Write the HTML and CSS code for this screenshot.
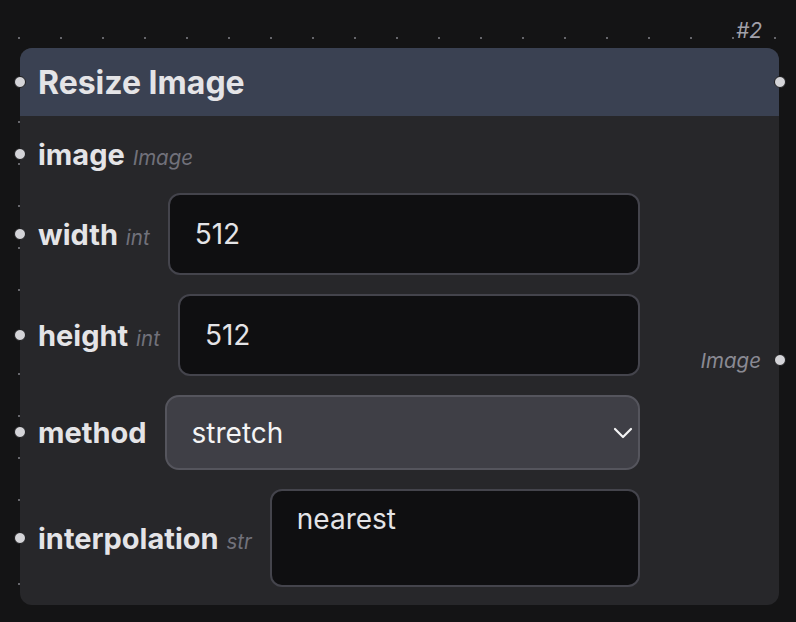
FILE: index.html
```html
<!doctype html>
<html>

<head>
    <title>Resize Image</title>
    <link rel="stylesheet" href="styles.css">
</head>

<body>
    <div class="canvas">
        <div class="node">
            <span class="node-id">#2</span>
            <div class="node-header">
                <span class="port port-left"></span>
                <h1>Resize Image</h1>
                <span class="port port-right"></span>
            </div>
            <div class="node-body">
                <div class="inputs">
                    <div class="field field-image">
                        <span class="port port-left"></span>
                        <label>image <i>Image</i></label>
                    </div>
                    <div class="field">
                        <span class="port port-left"></span>
                        <label>width <i>int</i></label>
                        <input class="box" type="text" value="512">
                    </div>
                    <div class="field">
                        <span class="port port-left"></span>
                        <label>height <i>int</i></label>
                        <input class="box" type="text" value="512">
                    </div>
                    <div class="field">
                        <span class="port port-left"></span>
                        <label>method</label>
                        <div class="select-wrap">
                            <select class="select">
                                <option>stretch</option>
                                <option>fit</option>
                                <option>fill</option>
                            </select>
                            <svg class="chevron" width="20" height="12" viewBox="0 0 20 12">
                                <path d="M2 2 L10 10 L18 2" fill="none" stroke="#f4f4f5" stroke-width="2.2" stroke-linecap="round" stroke-linejoin="round" />
                            </svg>
                        </div>
                    </div>
                    <div class="field">
                        <span class="port port-left"></span>
                        <label>interpolation <i>str</i></label>
                        <textarea class="box area">nearest</textarea>
                    </div>
                </div>
                <div class="outputs">
                    <span class="out-label">Image</span>
                    <span class="port port-right"></span>
                </div>
            </div>
        </div>
    </div>
</body>

</html>
```

FILE: styles.css
```css
html,
body {
    margin: 0;
    height: 100%;
}

body {
    background-color: #141415;
    font-family: Inter, "Noto Sans", sans-serif;
    color: #e4e4e7;
    overflow: hidden;
}

.canvas {
    position: relative;
    width: 100%;
    height: 100%;
    background-image: radial-gradient(circle, #66666b 0.9px, transparent 1.5px);
    background-size: 42px 42px;
    background-position: -2px 17px;
}

.node {
    position: absolute;
    left: 20px;
    top: 48px;
    width: 759px;
    background: #27272a;
    border-radius: 12px;
}

.node-id {
    position: absolute;
    right: 17px;
    top: -30px;
    font-size: 21px;
    font-style: italic;
    color: #a1a1aa;
}

.node-header {
    position: relative;
    height: 68px;
    padding-left: 18px;
    display: flex;
    align-items: center;
    background: #3a4152;
    border-radius: 12px 12px 0 0;
}

.node-header h1 {
    margin: 0;
    font-size: 32px;
    font-weight: 700;
    color: #e4e4e7;
}

.port {
    position: absolute;
    top: 50%;
    width: 10px;
    height: 10px;
    margin-top: -6.5px;
    border-radius: 50%;
    background: #d4d4d8;
    border: 1.5px solid #1c1c1e;
}

.port-left {
    left: -6.5px;
}

.port-right {
    right: -6.5px;
}

.node-body {
    position: relative;
    display: flex;
    padding: 18px;
}

.inputs {
    flex: 1;
    min-width: 0;
    display: flex;
    flex-direction: column;
    gap: 19px;
}

.field {
    position: relative;
    display: flex;
    align-items: center;
    gap: 18px;
}

.field .port-left {
    left: -24.5px;
}

.field-image {
    height: 40px;
}

.field label {
    white-space: nowrap;
    font-size: 29px;
    font-weight: 700;
    color: #e4e4e7;
}

.field label i,
.out-label {
    font-size: 20.5px;
    font-weight: 400;
    font-style: italic;
    color: #71717a;
    margin-left: 1px;
}

.box {
    flex: 1;
    min-width: 0;
    width: 0;
    height: 82px;
    box-sizing: border-box;
    padding: 0 25px;
    background: #0f0f11;
    border: 2px solid #44444c;
    border-radius: 12px;
    color: #e4e4e7;
    font-family: Inter, "Noto Sans", sans-serif;
    font-size: 28px;
    outline: none;
}

.area {
    height: 98px;
    padding-top: 12px;
    resize: none;
    line-height: 1.2;
}

.select-wrap {
    position: relative;
    flex: 1;
    min-width: 0;
}

.select {
    width: 100%;
    height: 75px;
    box-sizing: border-box;
    padding: 0 25px;
    appearance: none;
    -webkit-appearance: none;
    background: #3f3f46;
    border: 2px solid #55555d;
    border-radius: 14px;
    color: #f4f4f5;
    font-family: Inter, "Noto Sans", sans-serif;
    font-size: 28px;
    outline: none;
}

.chevron {
    position: absolute;
    right: 7px;
    top: 32px;
}

.outputs {
    position: relative;
    flex: 0 0 121px;
    display: flex;
    align-items: center;
    justify-content: flex-end;
}

.outputs .port-right {
    right: -24.5px;
}

.out-label {
    color: #8a8a93;
}
```
